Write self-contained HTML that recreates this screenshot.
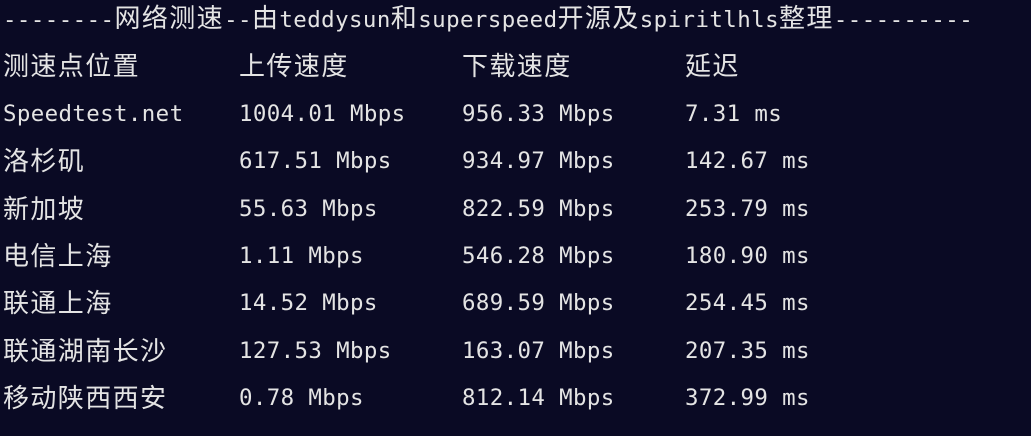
<!DOCTYPE html>
<html><head><meta charset="utf-8"><style>
html,body{margin:0;padding:0;background:#0a0a24;width:1031px;height:436px;overflow:hidden}
.r{position:absolute;height:30px;line-height:30px;white-space:pre;color:#e4e4e4;font-family:"DejaVu Sans Mono","Liberation Mono",monospace;font-size:22.4px;letter-spacing:0.4px}
.c{font-family:"Liberation Sans","Noto Sans CJK SC",sans-serif;font-size:26px;letter-spacing:1.4px}
.a{position:absolute;top:0}
</style></head><body>
<div class="r" style="top:3px;left:3px;letter-spacing:0.45px">--------<span class="c">网络测速</span>--<span class="c">由</span>teddysun<span class="c">和</span>superspeed<span class="c">开源及</span>spiritlhls<span class="c">整理</span>----------</div>

<div class="r" style="top:51px;left:0;width:1031px">
<span class="a c" style="left:3px">测速点位置</span><span class="a c" style="left:239px">上传速度</span><span class="a c" style="left:462px">下载速度</span><span class="a c" style="left:685px">延迟</span></div>

<div class="r" style="top:99px;left:0;width:1031px">
<span class="a" style="left:3px">Speedtest.net</span><span class="a" style="left:239px">1004.01 Mbps</span><span class="a" style="left:462px">956.33 Mbps</span><span class="a" style="left:685px">7.31 ms</span></div>

<div class="r" style="top:146px;left:0;width:1031px">
<span class="a c" style="left:3px">洛杉矶</span><span class="a" style="left:239px">617.51 Mbps</span><span class="a" style="left:462px">934.97 Mbps</span><span class="a" style="left:685px">142.67 ms</span></div>

<div class="r" style="top:194px;left:0;width:1031px">
<span class="a c" style="left:3px">新加坡</span><span class="a" style="left:239px">55.63 Mbps</span><span class="a" style="left:462px">822.59 Mbps</span><span class="a" style="left:685px">253.79 ms</span></div>

<div class="r" style="top:241px;left:0;width:1031px">
<span class="a c" style="left:3px">电信上海</span><span class="a" style="left:239px">1.11 Mbps</span><span class="a" style="left:462px">546.28 Mbps</span><span class="a" style="left:685px">180.90 ms</span></div>

<div class="r" style="top:288px;left:0;width:1031px">
<span class="a c" style="left:3px">联通上海</span><span class="a" style="left:239px">14.52 Mbps</span><span class="a" style="left:462px">689.59 Mbps</span><span class="a" style="left:685px">254.45 ms</span></div>

<div class="r" style="top:336px;left:0;width:1031px">
<span class="a c" style="left:3px">联通湖南长沙</span><span class="a" style="left:239px">127.53 Mbps</span><span class="a" style="left:462px">163.07 Mbps</span><span class="a" style="left:685px">207.35 ms</span></div>

<div class="r" style="top:383px;left:0;width:1031px">
<span class="a c" style="left:3px">移动陕西西安</span><span class="a" style="left:239px">0.78 Mbps</span><span class="a" style="left:462px">812.14 Mbps</span><span class="a" style="left:685px">372.99 ms</span></div>
</body></html>
